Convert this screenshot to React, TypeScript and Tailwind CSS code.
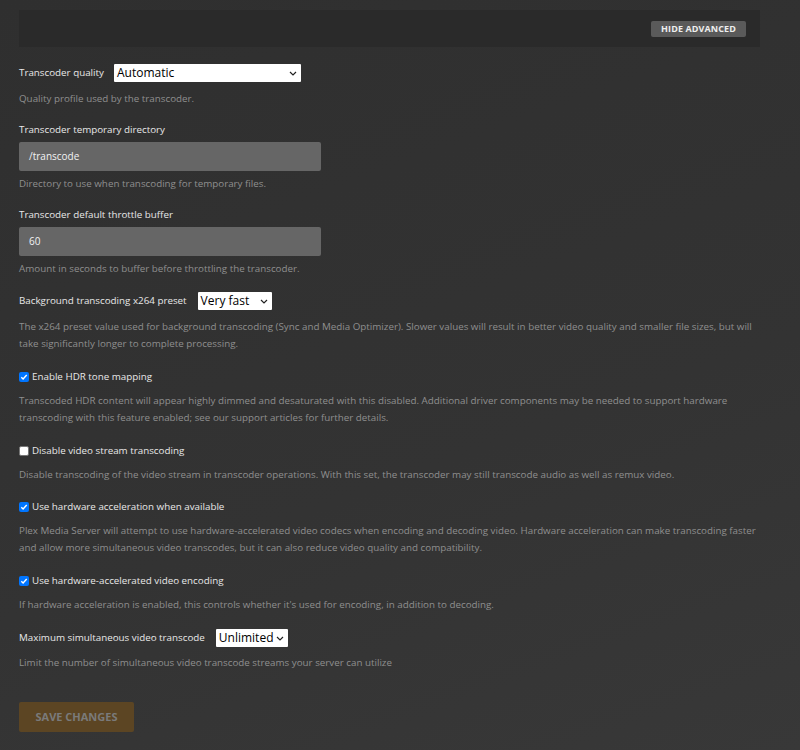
import React from "react";

const Chevron = () => (
  <svg width="8" height="5" viewBox="0 0 8 5" className="ml-auto shrink-0">
    <path d="M1 1l3 3 3-3" fill="none" stroke="#222" strokeWidth="1.2" />
  </svg>
);

function Select({ value, w }: { value: string; w: string }) {
  return (
    <div className={`flex h-[18px] items-center bg-white pl-[3px] pr-[4px] text-[12px] text-black ${w} rounded-[1px]`}>
      <span className="whitespace-nowrap">{value}</span>
      <Chevron />
    </div>
  );
}

function Check({ on }: { on: boolean }) {
  return on ? (
    <div className="flex h-[10px] w-[10px] items-center justify-center rounded-[2px] bg-[#0075ff]">
      <svg width="8" height="8" viewBox="0 0 8 8">
        <path d="M1.3 4.2l1.8 1.8 3.6-4" fill="none" stroke="#fff" strokeWidth="1.4" />
      </svg>
    </div>
  ) : (
    <div className="h-[10px] w-[10px] rounded-[2px] border border-[#767676] bg-white" />
  );
}

const Desc = ({ children, mt }: { children: React.ReactNode; mt: string }) => (
  <p className={`${mt} text-[9.8px] leading-[17px] text-[#8f8f8f]`}>{children}</p>
);

const Label = ({ children }: { children: React.ReactNode }) => (
  <span className="text-[9.8px] leading-[14px] text-[#e8e8e8]">{children}</span>
);

function CheckRow({ on, label }: { on: boolean; label: string }) {
  return (
    <div className="flex h-[14px] items-center gap-[3px]">
      <Check on={on} />
      <Label>{label}</Label>
    </div>
  );
}

export default function App() {
  return (
    <div
      className="min-h-[750px] w-[800px] bg-[linear-gradient(160deg,#2f2f2f_0%,#333333_60%,#383838_100%)] px-[19px] pt-[10px] text-[#e5e5e5]"
      style={{ fontFamily: '"Open Sans", sans-serif' }}
    >
      <div className="w-[741px]">
        <div className="flex h-[37px] items-center justify-end bg-[#2a2a2a] pr-[14px]">
          <div className="flex h-[16px] items-center rounded-[2px] bg-[#5a5a5a] px-[10px] text-[9px] font-bold tracking-[0.1px] text-[#eee]">
            HIDE ADVANCED
          </div>
        </div>

        <div className="mt-[17px]">
          <div className="flex h-[18px] items-center gap-[10px]">
            <Label>Transcoder quality</Label>
            <Select value="Automatic" w="w-[187px]" />
          </div>
          <Desc mt="mt-[7.5px]">Quality profile used by the transcoder.</Desc>
        </div>

        <div className="mt-[16.5px]">
          <div className="flex h-[14px] items-center">
            <Label>Transcoder temporary directory</Label>
          </div>
          <div className="mt-[5px] flex h-[29px] w-[302px] items-center rounded-[2px] bg-[#666666] px-[10px] text-[10px] text-[#f2f2f2]">
            /transcode
          </div>
          <Desc mt="mt-[3.5px]">Directory to use when transcoding for temporary files.</Desc>
        </div>

        <div className="mt-[16.5px]">
          <div className="flex h-[14px] items-center">
            <Label>Transcoder default throttle buffer</Label>
          </div>
          <div className="mt-[5px] flex h-[29px] w-[302px] items-center rounded-[2px] bg-[#666666] px-[10px] text-[10px] text-[#f2f2f2]">
            60
          </div>
          <Desc mt="mt-[3.5px]">Amount in seconds to buffer before throttling the transcoder.</Desc>
        </div>

        <div className="mt-[15.5px]">
          <div className="flex h-[18px] items-center gap-[11px]">
            <Label>Background transcoding x264 preset</Label>
            <Select value="Very fast" w="w-[74px]" />
          </div>
          <Desc mt="mt-[7.5px]">
            The x264 preset value used for background transcoding (Sync and Media Optimizer). Slower values will result in better video quality and smaller file sizes, but will take significantly longer to complete processing.
          </Desc>
        </div>

        <div className="mt-[18.5px]">
          <CheckRow on label="Enable HDR tone mapping" />
          <Desc mt="mt-[8px]">
            Transcoded HDR content will appear highly dimmed and desaturated with this disabled. Additional driver components may be needed to support hardware transcoding with this feature enabled; see our support articles for further details.
          </Desc>
        </div>

        <div className="mt-[17.5px]">
          <CheckRow on={false} label="Disable video stream transcoding" />
          <Desc mt="mt-[8px]">
            Disable transcoding of the video stream in transcoder operations. With this set, the transcoder may still transcode audio as well as remux video.
          </Desc>
        </div>

        <div className="mt-[17.5px]">
          <CheckRow on label="Use hardware acceleration when available" />
          <Desc mt="mt-[8px]">
            Plex Media Server will attempt to use hardware-accelerated video codecs when encoding and decoding video. Hardware acceleration can make transcoding faster and allow more simultaneous video transcodes, but it can also reduce video quality and compatibility.
          </Desc>
        </div>

        <div className="mt-[17.5px]">
          <CheckRow on label="Use hardware-accelerated video encoding" />
          <Desc mt="mt-[8px]">
            If hardware acceleration is enabled, this controls whether it's used for encoding, in addition to decoding.
          </Desc>
        </div>

        <div className="mt-[16.5px]">
          <div className="flex h-[18px] items-center gap-[11px]">
            <Label>Maximum simultaneous video transcode</Label>
            <Select value="Unlimited" w="w-[72px]" />
          </div>
          <Desc mt="mt-[6.5px]">Limit the number of simultaneous video transcode streams your server can utilize</Desc>
        </div>

        <div className="mt-[31.5px] flex h-[30px] w-[115px] items-center justify-center rounded-[2px] bg-[#5c4523] text-[11px] font-bold text-[#7a7a7a]">
          SAVE CHANGES
        </div>
      </div>
    </div>
  );
}
